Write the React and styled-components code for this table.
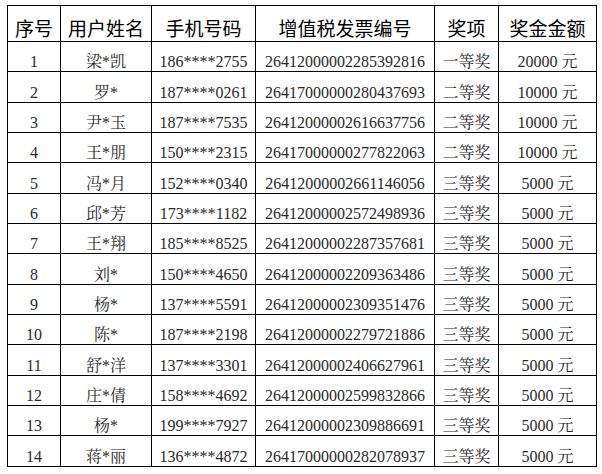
import React from "react";
import styled, { createGlobalStyle } from "styled-components";

const Global = createGlobalStyle`
  html, body { margin: 0; padding: 0; background: #fff; }
  body { width: 602px; height: 474px; overflow: hidden; }
`;

const Page = styled.div`
  padding: 5px 0 0 7px;
`;

const Table = styled.table`
  border-collapse: collapse;
  table-layout: fixed;
  width: 589px;
  color: #111;
`;

const HeadCell = styled.th`
  border: 1.4px solid #000;
  height: 36px;
  padding: 0 0 4px 0;
  box-sizing: border-box;
  font-family: "Noto Sans CJK SC", sans-serif;
  font-weight: 400;
  font-size: 19px;
  text-align: center;
  vertical-align: bottom;
  white-space: nowrap;
  color: #000;
  line-height: 1;
`;

const Cell = styled.td`
  border: 1.4px solid #000;
  height: 30.35px;
  padding: 0 0 1px 0;
  box-sizing: border-box;
  font-family: "Liberation Serif", "Noto Serif CJK SC", "Noto Sans CJK SC", serif;
  font-weight: 400;
  font-size: 16px;
  text-align: center;
  vertical-align: bottom;
  white-space: nowrap;
  line-height: 1;
  color: #2a2a2a;
`;

const cols = [53, 91, 104, 179, 64, 98];
const headers = ["序号", "用户姓名", "手机号码", "增值税发票编号", "奖项", "奖金金额"];

const rows = [
  ["1", "梁*凯", "186****2755", "26412000002285392816", "一等奖", "20000 元"],
  ["2", "罗*", "187****0261", "26417000000280437693", "二等奖", "10000 元"],
  ["3", "尹*玉", "187****7535", "26412000002616637756", "二等奖", "10000 元"],
  ["4", "王*朋", "150****2315", "26417000000277822063", "二等奖", "10000 元"],
  ["5", "冯*月", "152****0340", "26412000002661146056", "三等奖", "5000 元"],
  ["6", "邱*芳", "173****1182", "26412000002572498936", "三等奖", "5000 元"],
  ["7", "王*翔", "185****8525", "26412000002287357681", "三等奖", "5000 元"],
  ["8", "刘*", "150****4650", "26412000002209363486", "三等奖", "5000 元"],
  ["9", "杨*", "137****5591", "26412000002309351476", "三等奖", "5000 元"],
  ["10", "陈*", "187****2198", "26412000002279721886", "三等奖", "5000 元"],
  ["11", "舒*洋", "137****3301", "26412000002406627961", "三等奖", "5000 元"],
  ["12", "庄*倩", "158****4692", "26412000002599832866", "三等奖", "5000 元"],
  ["13", "杨*", "199****7927", "26412000002309886691", "三等奖", "5000 元"],
  ["14", "蒋*丽", "136****4872", "26417000000282078937", "三等奖", "5000 元"],
];

export default function App() {
  return (
    <Page>
      <Global />
      <Table>
        <colgroup>
          {cols.map((w, i) => (
            <col key={i} style={{ width: w }} />
          ))}
        </colgroup>
        <thead>
          <tr>
            {headers.map((h) => (
              <HeadCell key={h}>{h}</HeadCell>
            ))}
          </tr>
        </thead>
        <tbody>
          {rows.map((r) => (
            <tr key={r[0]}>
              {r.map((c, i) => (
                <Cell key={i}>{c}</Cell>
              ))}
            </tr>
          ))}
        </tbody>
      </Table>
    </Page>
  );
}
